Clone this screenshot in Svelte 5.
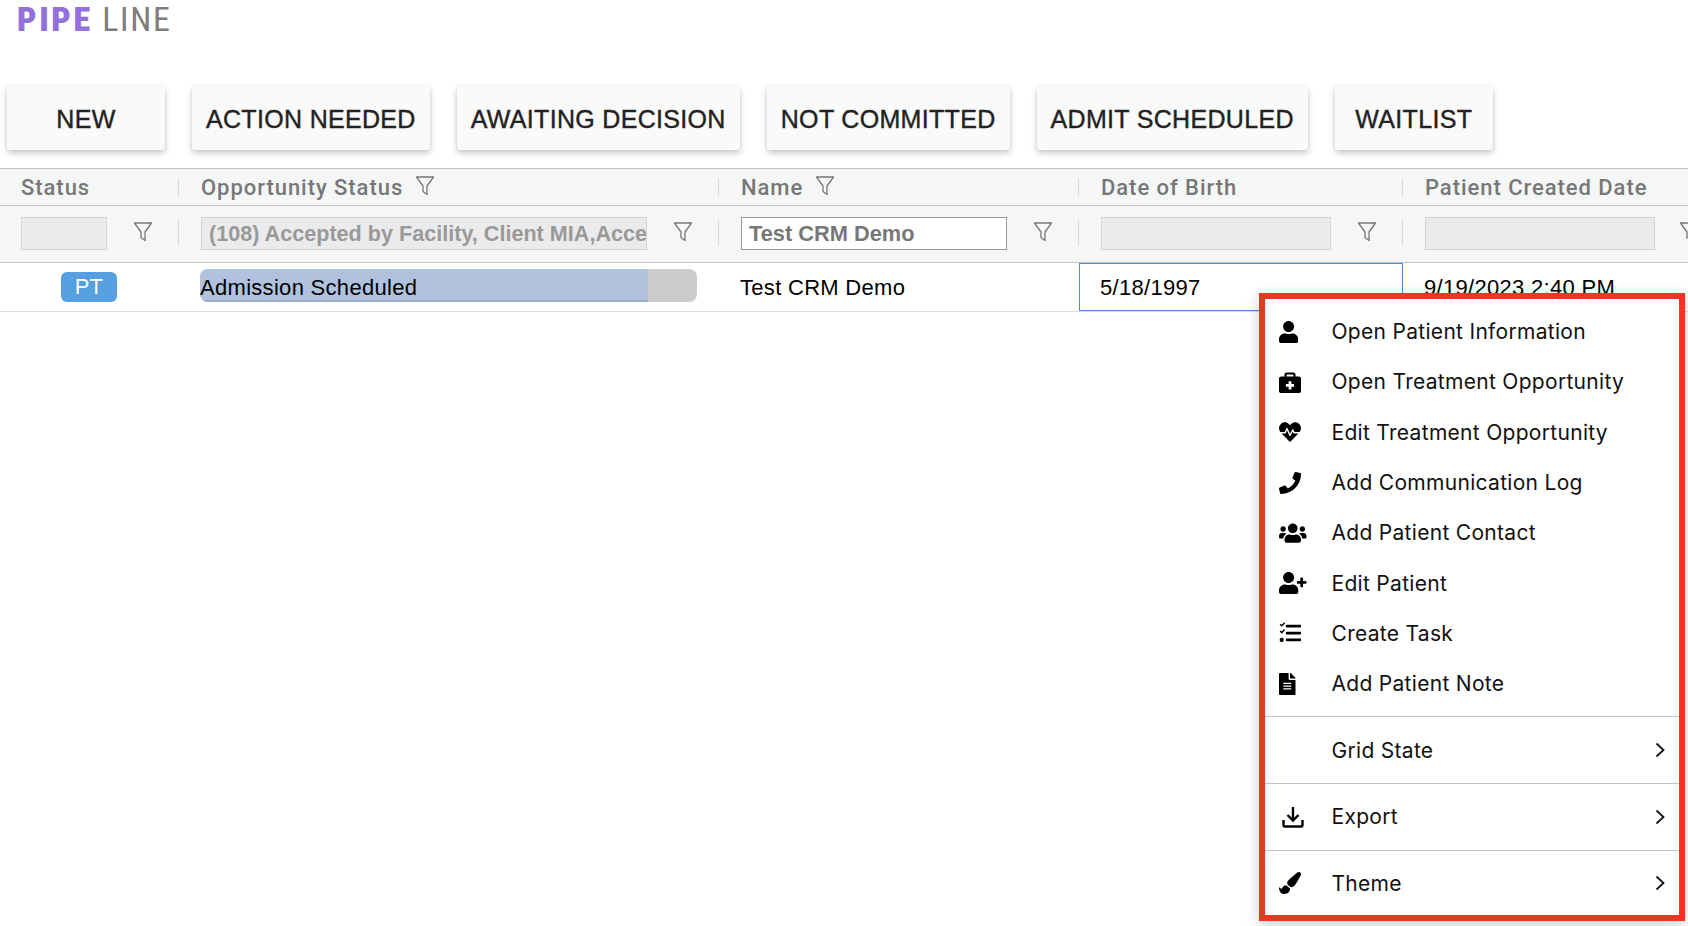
<script>
  const tabs = ['NEW', 'ACTION NEEDED', 'AWAITING DECISION', 'NOT COMMITTED', 'ADMIT SCHEDULED', 'WAITLIST'];

  // font awesome style glyphs
  const icons = {
    user: { box: '0 0 448 512', d: 'M224 256c70.7 0 128-57.3 128-128S294.7 0 224 0 96 57.3 96 128s57.3 128 128 128zm89.6 32h-16.7c-22.2 10.2-46.9 16-72.9 16s-50.6-5.8-72.9-16h-16.7C60.2 288 0 348.2 0 422.4V464c0 26.5 21.5 48 48 48h352c26.5 0 48-21.5 48-48v-41.6c0-74.2-60.2-134.4-134.4-134.4z' },
    case: { box: '0 0 512 512', d: 'M464 128h-80V80c0-26.5-21.5-48-48-48H176c-26.5 0-48 21.5-48 48v48H48c-26.5 0-48 21.5-48 48v288c0 26.5 21.5 48 48 48h416c26.5 0 48-21.5 48-48V176c0-26.5-21.5-48-48-48zM176 80h160v48H176V80zm176 280c0 4.4-3.6 8-8 8h-56v56c0 4.4-3.6 8-8 8h-48c-4.4 0-8-3.6-8-8v-56h-56c-4.4 0-8-3.6-8-8v-48c0-4.4 3.6-8 8-8h56v-56c0-4.4 3.6-8 8-8h48c4.4 0 8 3.6 8 8v56h56c4.4 0 8 3.6 8 8v48z' },
    heart: { box: '0 0 512 512', d: 'M320.2 243.8l-49.7 99.4c-6 12.1-23.4 11.7-28.9-.6l-56.9-126.3-30 71.7H60.6l182.5 186.5c7.1 7.3 18.6 7.3 25.7 0L451.4 288H342.3l-22.1-44.2zM473.7 73.9l-2.4-2.5c-51.5-52.6-135.8-52.6-187.4 0L256 100l-27.9-28.5c-51.5-52.7-135.9-52.7-187.4 0l-2.4 2.4C-10.4 123.7-12.5 203 31 256h102.4l35.9-86.2c5.4-12.9 23.6-13.2 29.4-.4l58.2 129.3 49-97.9c5.9-11.8 22.7-11.8 28.6 0l27.6 55.2H481c43.5-53 41.4-132.3-7.3-182.1z' },
    phone: { box: '0 0 512 512', d: 'M493.4 24.6l-104-24c-11.3-2.6-22.9 3.3-27.5 13.9l-48 112c-4.2 9.8-1.4 21.3 6.9 28l60.6 49.6c-36 76.7-98.9 140.5-177.2 177.2l-49.6-60.6c-6.8-8.3-18.2-11.1-28-6.9l-112 48C3.9 366.5-2 378.1.6 389.4l24 104C27.1 504.2 36.7 512 48 512c256.1 0 464-207.5 464-464 0-11.2-7.7-20.9-18.6-23.4z' },
    users: { box: '0 0 640 512', d: 'M96 224c35.3 0 64-28.7 64-64s-28.7-64-64-64-64 28.7-64 64 28.7 64 64 64zm448 0c35.3 0 64-28.7 64-64s-28.7-64-64-64-64 28.7-64 64 28.7 64 64 64zm32 32h-64c-17.6 0-33.5 7.1-45.1 18.6 40.3 22.1 68.9 62 75.1 109.4h66c17.7 0 32-14.3 32-32v-32c0-35.3-28.7-64-64-64zm-256 0c61.9 0 112-50.1 112-112S381.9 32 320 32 208 82.1 208 144s50.1 112 112 112zm76.8 32h-8.3c-20.8 10-43.9 16-68.5 16s-47.6-6-68.5-16h-8.3C179.6 288 128 339.6 128 403.2V432c0 26.5 21.5 48 48 48h288c26.5 0 48-21.5 48-48v-28.8c0-63.6-51.6-115.2-115.2-115.2zm-223.7-13.4C161.5 263.1 145.6 256 128 256H64c-35.3 0-64 28.7-64 64v32c0 17.7 14.3 32 32 32h65.9c6.3-47.4 34.9-87.3 75.2-109.4z' },
    userPlus: { box: '0 0 640 512', d: 'M624 208h-64v-64c0-8.8-7.2-16-16-16h-32c-8.8 0-16 7.2-16 16v64h-64c-8.8 0-16 7.2-16 16v32c0 8.8 7.2 16 16 16h64v64c0 8.8 7.2 16 16 16h32c8.8 0 16-7.2 16-16v-64h64c8.8 0 16-7.2 16-16v-32c0-8.8-7.2-16-16-16zm-400 48c70.7 0 128-57.3 128-128S294.7 0 224 0 96 57.3 96 128s57.3 128 128 128zm89.6 32h-16.7c-22.2 10.2-46.9 16-72.9 16s-50.6-5.8-72.9-16h-16.7C60.2 288 0 348.2 0 422.4V464c0 26.5 21.5 48 48 48h352c26.5 0 48-21.5 48-48v-41.6c0-74.2-60.2-134.4-134.4-134.4z' },
    tasks: { box: '0 0 512 512', d: 'M139.6 24.6l-12.6-12.5c-3.1-3.1-8.2-3.1-11.3 0L63.5 64 45 45.8c-3.1-3.1-8.2-3.1-11.3 0L21 58.4c-3.1 3.1-3.1 8.2 0 11.3L57.9 106.5c3.1 3.1 8.2 3.1 11.3 0l70.4-70.6c3.1-3.1 3.1-8.2 0-11.3zM139.6 183.6l-12.6-12.5c-3.1-3.1-8.2-3.1-11.3 0L63.5 223 45 204.8c-3.1-3.1-8.2-3.1-11.3 0L21 217.4c-3.1 3.1-3.1 8.2 0 11.3l36.9 36.8c3.1 3.1 8.2 3.1 11.3 0l70.4-70.6c3.1-3.1 3.1-8.2 0-11.3zM64 368c-26.5 0-48 21.5-48 48s21.5 48 48 48 48-21.5 48-48-21.5-48-48-48zM496 384H176c-8.8 0-16 7.2-16 16v32c0 8.8 7.2 16 16 16h320c8.8 0 16-7.2 16-16v-32c0-8.8-7.2-16-16-16zM496 64H176c-8.8 0-16 7.2-16 16v32c0 8.8 7.2 16 16 16h320c8.8 0 16-7.2 16-16V80c0-8.8-7.2-16-16-16zM496 224H176c-8.8 0-16 7.2-16 16v32c0 8.8 7.2 16 16 16h320c8.8 0 16-7.2 16-16v-32c0-8.8-7.2-16-16-16z' },
    file: { box: '0 0 384 512', d: 'M224 136V0H24C10.7 0 0 10.7 0 24v464c0 13.3 10.7 24 24 24h336c13.3 0 24-10.7 24-24V160H248c-13.2 0-24-10.8-24-24zm64 236c0 6.6-5.4 12-12 12H108c-6.6 0-12-5.4-12-12v-8c0-6.6 5.4-12 12-12h168c6.6 0 12 5.4 12 12v8zm0-64c0 6.6-5.4 12-12 12H108c-6.6 0-12-5.4-12-12v-8c0-6.6 5.4-12 12-12h168c6.6 0 12 5.4 12 12v8zm0-72v8c0 6.6-5.4 12-12 12H108c-6.6 0-12-5.4-12-12v-8c0-6.6 5.4-12 12-12h168c6.6 0 12 5.4 12 12zm96-114.1v6.1H256V0h6.1c6.4 0 12.5 2.5 17 7l97.9 98c4.5 4.5 7 10.6 7 16.9z' },
    brush: { box: '0 0 512 512', d: 'M167.02 309.34c-40.12 2.58-76.53 17.86-97.19 72.3-2.35 6.21-8 9.98-14.59 9.98-11.11 0-45.46-27.67-55.25-34.35C0 439.62 37.93 512 128 512c75.86 0 128-43.77 128-120.19 0-3.11-.65-6.08-.97-9.13l-88.01-73.34zM457.89 0c-15.16 0-29.37 6.71-40.21 16.45C213.27 199.05 192 203.34 192 257.09c0 13.7 3.25 26.76 8.73 38.7l63.82 53.18c7.21 1.8 14.64 3.03 22.39 3.03 62.11 0 98.11-45.47 211.16-256.46 7.38-14.35 13.9-29.85 13.9-45.99C512 20.64 486 0 457.89 0z' }
  };

  const menuItems = [
    { label: 'Open Patient Information', icon: 'user' },
    { label: 'Open Treatment Opportunity', icon: 'case' },
    { label: 'Edit Treatment Opportunity', icon: 'heart' },
    { label: 'Add Communication Log', icon: 'phone' },
    { label: 'Add Patient Contact', icon: 'users' },
    { label: 'Edit Patient', icon: 'userPlus' },
    { label: 'Create Task', icon: 'tasks' },
    { label: 'Add Patient Note', icon: 'file' }
  ];
</script>

{#snippet funnel()}
  <svg class="funnel" viewBox="0 0 20 22" aria-hidden="true">
    <path d="M1.5 2h17l-6.5 9v8.5l-4-3V11z" />
  </svg>
{/snippet}

{#snippet chevron()}
  <svg class="chevron" viewBox="0 0 10 16" aria-hidden="true">
    <path d="M1.5 1.5 8.500 8l-7 6.500" />
  </svg>
{/snippet}

<div class="page">
  <div class="logo"><b>PIPE</b> <span>LINE</span></div>

  <div class="tabs">
    {#each tabs as tab}
      <button class="tab">{tab}</button>
    {/each}
  </div>

  <div class="grid">
    <div class="row head">
      <div class="cell status"><span class="title">Status</span></div>
      <div class="cell opp"><span class="title">Opportunity Status</span>{@render funnel()}</div>
      <div class="cell name"><span class="title">Name</span>{@render funnel()}</div>
      <div class="cell dob"><span class="title">Date of Birth</span></div>
      <div class="cell created last"><span class="title">Patient Created Date</span></div>
    </div>

    <div class="row filters">
      <div class="cell status"><div class="box"></div>{@render funnel()}</div>
      <div class="cell opp"><div class="box">(108) Accepted by Facility, Client MIA,Acce</div>{@render funnel()}</div>
      <div class="cell name"><div class="box active">Test CRM Demo</div>{@render funnel()}</div>
      <div class="cell dob"><div class="box"></div>{@render funnel()}</div>
      <div class="cell created last"><div class="box"></div>{@render funnel()}</div>
    </div>

    <div class="row data">
      <div class="cell status"><span class="badge">PT</span></div>
      <div class="cell opp"><div class="bar"><div class="fill">Admission Scheduled</div></div></div>
      <div class="cell name">Test CRM Demo</div>
      <div class="cell dob selected">5/18/1997</div>
      <div class="cell created">9/19/2023 2:40 PM</div>
    </div>
  </div>

  <div class="menu">
    {#each menuItems as item}
      <div class="item">
        <span class="icon">
          <svg viewBox={icons[item.icon].box} aria-hidden="true"><path d={icons[item.icon].d} /></svg>
        </span>
        {item.label}
      </div>
    {/each}
    <div class="item sub first">
      <span class="icon"></span>
      Grid State
      {@render chevron()}
    </div>
    <div class="item sub">
      <span class="icon">
        <svg class="export" viewBox="0 0 22 22" aria-hidden="true">
          <path d="M11 1v13M5.500 9l5.500 5.500L16.500 9M1.500 14v5q0 1.500 1.500 1.500h16q1.500 0 1.500-1.500v-5" />
        </svg>
      </span>
      Export
      {@render chevron()}
    </div>
    <div class="item sub">
      <span class="icon">
        <svg viewBox={icons.brush.box} aria-hidden="true"><path d={icons.brush.d} /></svg>
      </span>
      Theme
      {@render chevron()}
    </div>
  </div>
</div>

<style>
  :global(body) {
    margin: 0;
    background: #fff;
  }

  .page {
    position: relative;
    width: 1688px;
    height: 926px;
    overflow: hidden;
    font-family: 'Liberation Sans', Arial, sans-serif;
  }

  .logo {
    height: 86px;
    padding: 2px 0 0 17px;
    box-sizing: border-box;
    font-size: 34px;
    line-height: 34px;
    color: #7d7d7d;
    font-family: 'Roboto', sans-serif;
    font-stretch: condensed;
    letter-spacing: 1.7px;
  }

  .logo b {
    color: #9370db;
    font-weight: 900;
    letter-spacing: 2.6px;
  }

  .tabs {
    display: flex;
    gap: 27px;
    padding-left: 7px;
    height: 64px;
  }

  .tab {
    min-width: 158px;
    padding: 2px 14px 0;
    border: none;
    border-radius: 3px;
    background: #fafafa;
    color: #222;
    font-family: inherit;
    font-size: 25px;
    letter-spacing: 0.32px;
    -webkit-text-stroke: 0.4px #222;
    box-shadow: 0 3px 6px rgba(0, 0, 0, 0.22), 0 0 3px rgba(0, 0, 0, 0.06);
  }

  .grid {
    margin-top: 18px;
    width: 1688px;
    overflow: hidden;
    border-top: 1px solid #bdc3c7;
  }

  .row {
    display: grid;
    grid-template-columns: 179px 540px 360px 324px 360px;
  }

  .cell {
    box-sizing: border-box;
    display: flex;
    align-items: center;
    padding-left: 21px;
    position: relative;
    min-width: 0;
    white-space: nowrap;
  }

  .head .cell:not(.status),
  .filters .cell:not(.status) {
    padding-left: 22px;
  }

  .head {
    height: 36px;
    background: #f5f7f7;
    border-bottom: 1px solid #bdc3c7;
    color: #777;
    font-size: 22px;
    letter-spacing: 0.95px;
    font-family: 'Roboto', sans-serif;
    font-weight: 500;
  }

  .head .cell::after,
  .filters .cell::after {
    content: '';
    position: absolute;
    right: 0;
    top: 9px;
    bottom: 9px;
    width: 1px;
    background: #d5d8d9;
  }

  .head .last::after,
  .filters .last::after {
    display: none;
  }

  .head .funnel {
    margin: -3px 0 0 12px;
  }

  .filters {
    height: 56px;
    background: #f5f7f7;
    border-bottom: 1px solid #bdc3c7;
  }

  .filters .cell::after {
    top: 14px;
    bottom: 16px;
  }

  .box {
    box-sizing: border-box;
    height: 33px;
    margin-bottom: 2px;
    padding: 0 7px;
    background: #ebebeb;
    border: 1px solid #d3d3d3;
    color: #999;
    font-size: 21.8px;
    font-weight: 700;
    line-height: 31px;
    overflow: hidden;
  }

  .status .box { width: 86px; }
  .opp .box {
    width: 446px;
    padding-right: 0;
    font-size: 21.6px;
  }
  .name .box { width: 266px; }
  .dob .box, .created .box { width: 230px; }

  .box.active {
    background: #fff;
    border-color: #999;
    color: #777;
  }

  .filters .funnel {
    position: absolute;
    right: 26px;
    top: 15px;
  }

  .filters .created .funnel {
    right: auto;
    left: 276px;
  }

  .funnel {
    width: 20px;
    height: 22px;
    flex: none;
  }

  .funnel path {
    fill: none;
    stroke: #777;
    stroke-width: 1.3;
    stroke-linejoin: round;
  }

  .data {
    height: 48px;
    border-bottom: 1px solid #ddd;
    font-size: 22px;
    letter-spacing: 0.3px;
    color: #000;
  }

  .data .name,
  .data .dob,
  .data .created {
    padding-top: 2px;
  }

  .data .status {
    padding: 0 0 0 61px;
  }

  .badge {
    width: 56px;
    height: 30px;
    border-radius: 6px;
    background: #569fe0;
    color: #fff;
    text-align: center;
    line-height: 30px;
  }

  .data .opp {
    padding: 0 0 3px 21px;
  }

  .bar {
    width: 497px;
    height: 33px;
    border-radius: 8px;
    background: #ccc;
    overflow: hidden;
  }

  .fill {
    width: 448px;
    height: 100%;
    box-sizing: border-box;
    background: #b0c2dd;
    border-bottom: 2px solid #9cadc8;
    line-height: 38px;
  }

  .selected {
    border: 1px solid #4a90d9;
    padding-left: 20px;
  }

  .menu {
    position: absolute;
    left: 1259px;
    top: 293px;
    width: 426px;
    height: 628px;
    box-sizing: border-box;
    padding-top: 7.5px;
    background: #fff;
    border: 6px solid #ee3524;
    box-shadow: 0 4px 14px rgba(0, 0, 0, 0.2);
    font-family: 'Inter', sans-serif;
    font-size: 21px;
    letter-spacing: 0.3px;
    color: #111;
  }

  .item {
    display: flex;
    align-items: center;
    height: 50.3px;
    padding-left: 14px;
  }

  .item.sub {
    height: 66.6px;
    border-top: 1px solid #c4c4c4;
    box-sizing: border-box;
  }

  .item.first {
    margin-top: 7.5px;
  }

  .icon {
    width: 52.500px;
    flex: none;
    display: flex;
    align-items: center;
  }

  .icon svg {
    height: 22px;
    fill: #000;
  }

  .icon .export {
    margin-left: 3px;
    fill: none;
    stroke: #000;
    stroke-width: 2.4;
  }

  .chevron {
    position: absolute;
    right: 14px;
    width: 10px;
    height: 16px;
    fill: none;
    stroke: #111;
    stroke-width: 1.8;
  }
</style>
